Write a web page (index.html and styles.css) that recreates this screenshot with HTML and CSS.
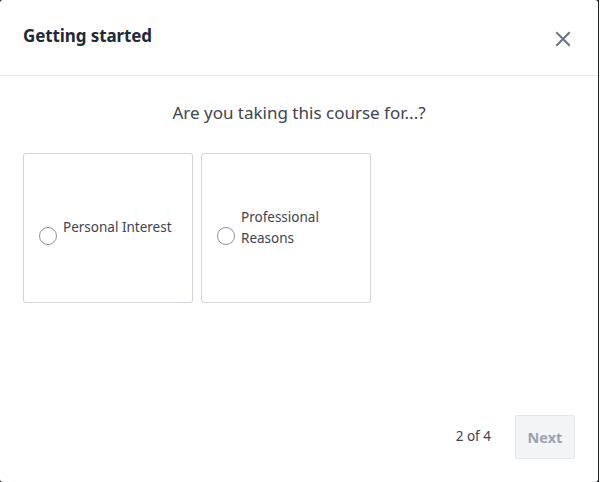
FILE: index.html
```html
<!DOCTYPE html>
<html lang="en">
<head>
<meta charset="utf-8">
<title>Getting started</title>
<link rel="stylesheet" href="styles.css">
</head>
<body>
<div class="backdrop">
  <div class="modal">
    <header class="modal-header">
      <h1 class="modal-title">Getting started</h1>
      <button class="close-btn" aria-label="Close">
        <svg width="16" height="16" viewBox="0 0 16 16" fill="none" stroke="#6b7280" stroke-width="2" stroke-linecap="square">
          <path d="M2 2 L14 14 M14 2 L2 14"/>
        </svg>
      </button>
    </header>
    <main class="modal-body">
      <p class="question">Are you taking this course for...?</p>
      <div class="options">
        <label class="option">
          <span class="radio"></span>
          <span class="option-text">Personal Interest</span>
        </label>
        <label class="option">
          <span class="radio"></span>
          <span class="option-text">Professional<br>Reasons</span>
        </label>
      </div>
    </main>
    <footer class="modal-footer">
      <span class="step">2 of 4</span>
      <button class="next-btn">Next</button>
    </footer>
  </div>
</div>
</body>
</html>
```
FILE: styles.css
```css
* { box-sizing: border-box; }
html, body {
  margin: 0;
  padding: 0;
  background: #ffffff;
}
body {
  font-family: "Noto Sans", "Open Sans", sans-serif;
  color: #374151;
}
.backdrop {
  width: 599px;
  height: 482px;
  background: #1c2130;
}
.modal {
  width: 598px;
  height: 482px;
  background: #ffffff;
  border-radius: 3px;
  display: flex;
  flex-direction: column;
}
.modal-header {
  height: 76px;
  border-bottom: 1px solid #e5e7eb;
  display: flex;
  align-items: center;
  justify-content: space-between;
  padding: 0 27px 0 23px;
}
.modal-title {
  margin: 0;
  font-size: 17px;
  font-weight: 700;
  color: #1f2937;
  letter-spacing: -0.1px;
  padding-bottom: 4px;
}
.close-btn {
  border: 0;
  background: none;
  padding: 0;
  width: 16px;
  height: 16px;
  display: flex;
  margin-top: 2px;
  cursor: pointer;
}
.modal-body {
  flex: 1;
  padding: 0 23px;
}
.question {
  margin: 24px 0 0;
  text-align: center;
  font-size: 17px;
  line-height: 26px;
  color: #3d4451;
}
.options {
  display: flex;
  gap: 8px;
  margin-top: 27px;
}
.option {
  width: 170px;
  height: 150px;
  border: 1px solid #d1d5db;
  border-radius: 3px;
  display: flex;
  align-items: center;
  padding: 0 15px;
  gap: 6px;
}
.radio {
  flex: none;
  width: 18px;
  height: 18px;
  border: 1px solid #8b93a1;
  border-radius: 50%;
  margin-top: 16px;
}
.option-text {
  font-size: 13.5px;
  line-height: 21px;
  color: #3d4451;
  margin-bottom: 1px;
}
.modal-footer {
  display: flex;
  justify-content: flex-end;
  align-items: center;
  gap: 24px;
  padding: 0 23px 23px;
}
.step {
  font-size: 13.5px;
  color: #3d4451;
  margin-bottom: 2px;
}
.next-btn {
  width: 60px;
  height: 44px;
  border: 1px solid #e5e7eb;
  background: #f3f4f6;
  border-radius: 2px;
  font-family: inherit;
  font-size: 14.5px;
  font-weight: 700;
  color: #9ca3af;
  padding: 0;
}
```
